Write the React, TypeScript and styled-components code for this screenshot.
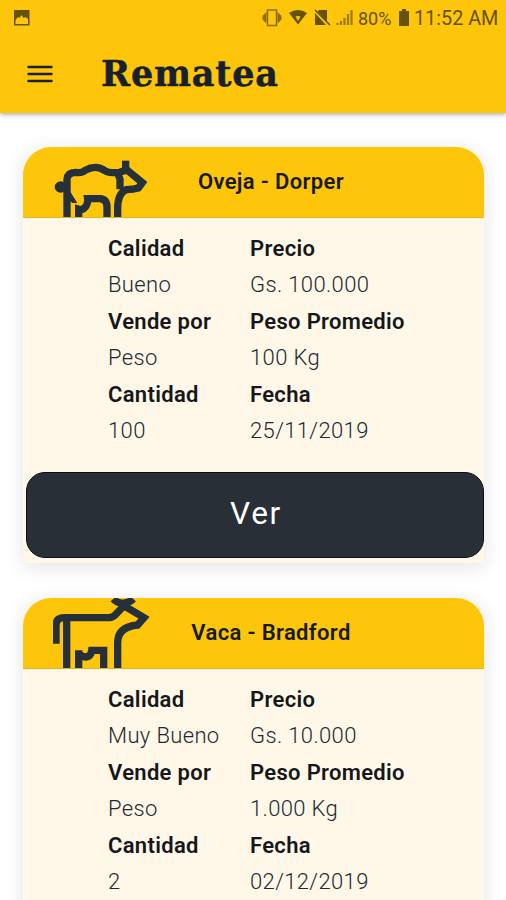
import React from "react";
import styled, { createGlobalStyle } from "styled-components";

const Global = createGlobalStyle`
  * { box-sizing: border-box; }
  body { margin: 0; background: #fff; font-family: Roboto, sans-serif; }
`;

const Screen = styled.div`
  width: 506px;
  height: 900px;
  overflow: hidden;
  background: #fff;
`;

const TopBar = styled.header`
  position: relative;
  height: 113px;
  background: #fec60b;
  box-shadow: 0 1px 5px rgba(0, 0, 0, 0.4);
`;

const StatusBar = styled.div`
  display: flex;
  align-items: center;
  height: 36px;
  padding: 0 8px 0 13px;
  color: #66520c;
`;

const StatusIcons = styled.svg<{ $push?: boolean }>`
  display: block;
  flex: none;
  margin-left: ${(p) => (p.$push ? "auto" : "0")};
`;

const StatusText = styled.span<{ $size: number; $width: number; $gap: number }>`
  flex: none;
  font-size: ${(p) => p.$size}px;
  line-height: 36px;
  padding-top: 1px;
  width: ${(p) => p.$width}px;
  margin-left: ${(p) => p.$gap}px;
  white-space: nowrap;
`;

const TitleRow = styled.div`
  display: flex;
  align-items: center;
  height: 75px;
  padding-left: 27px;
`;

const Brand = styled.h1`
  margin: 0 0 0 48px;
  font: bold 35px/73px "DejaVu Serif", serif;
  letter-spacing: 0.8px;
  color: #17212e;
  -webkit-text-stroke: 0.5px #17212e;
`;

const List = styled.main`
  display: flex;
  flex-direction: column;
  gap: 35px;
  padding: 34px 22px 0 23px;
`;

const Card = styled.article`
  height: 416px;
  flex: none;
  border-radius: 22px 22px 2px 2px;
  background: #fff8e9;
  box-shadow: 0 4px 20px rgba(0, 0, 0, 0.11);
`;

const CardHeader = styled.div`
  display: grid;
  grid-template-columns: 30px 100px 236px;
  height: 71px;
  border-bottom: 1px solid #e8b21c;
  border-radius: 28px 28px 0 0;
  background: #fec60b;
`;

const AnimalIcon = styled.svg`
  grid-column: 2;
  display: block;
  fill: none;
  stroke: #263038;
  stroke-width: 22;
`;

const CardTitle = styled.h2`
  margin: 0;
  font-size: 22px;
  line-height: 70px;
  font-weight: 600;
  letter-spacing: 0.36px;
  text-align: center;
  color: #17191b;
`;

const Details = styled.dl`
  display: grid;
  grid-template-columns: 142px 1fr;
  margin: 0;
  padding: 11.6px 0 0 85px;
  height: 254px;
  align-content: start;
`;

const Field = styled.div`
  height: 73px;
`;

const Label = styled.dt`
  font-size: 22px;
  line-height: 37.4px;
  font-weight: 600;
  letter-spacing: 0.32px;
  color: #15171a;
`;

const Value = styled.dd`
  margin: 0;
  font-size: 22px;
  line-height: 35.6px;
  font-weight: 330;
  letter-spacing: 0.36px;
  color: #222831;
`;

const ViewButton = styled.button`
  display: block;
  width: 458px;
  height: 86px;
  margin-left: 3px;
  padding: 0 0 2px 2px;
  border: 1px solid #07101b;
  border-radius: 19px;
  background: #282f37;
  color: #fff;
  font: 400 31.5px/80px Roboto, sans-serif;
  letter-spacing: 1.7px;
`;

const Sheep = () => (
  <AnimalIcon width="100" height="70" viewBox="130 21 300 210">
    <path d="M172 231V118Q174 97 198 97Q218 100 226 91Q242 82 257 82Q272 82 286 92Q294 98 308 98H334" />
    <ellipse cx="153" cy="141" rx="18" ry="17" fill="#263038" stroke="none" />
    <path d="M176 146L186 162L203 189H188L172 174Z" fill="#263038" stroke="none" />
    <path d="M207 231V208Q219 212 228 200Q236 188 234 176H270Q292 177 292 202V231" />
    <path d="M348 62V92" />
    <path d="M324 98L331 118V148M331 96L352 90L398 128L386 144Q372 148 350 149Q324 160 324 205V231" />
  </AnimalIcon>
);

const Cow = () => (
  <AnimalIcon width="100" height="70" viewBox="130 24 300 210">
    <path d="M139 161V107Q139 83 163 83H300Q312 81 320 71L340 50M171 85V234" />
    <path d="M311 27Q320 38 338 40Q360 38 371 27M332 41L403 83L384 105Q324 111 324 158V234" />
    <path d="M332 30H350V50H332Z" fill="#263038" stroke="none" />
    <path d="M207 234V181M207 188Q214 201 229 201Q244 199 246 181H282V234" />
  </AnimalIcon>
);

type Listing = {
  title: string;
  icon: React.ReactNode;
  fields: [string, string][];
};

const listings: Listing[] = [
  {
    title: "Oveja - Dorper",
    icon: <Sheep />,
    fields: [
      ["Calidad", "Bueno"],
      ["Precio", "Gs. 100.000"],
      ["Vende por", "Peso"],
      ["Peso Promedio", "100 Kg"],
      ["Cantidad", "100"],
      ["Fecha", "25/11/2019"],
    ],
  },
  {
    title: "Vaca - Bradford",
    icon: <Cow />,
    fields: [
      ["Calidad", "Muy Bueno"],
      ["Precio", "Gs. 10.000"],
      ["Vende por", "Peso"],
      ["Peso Promedio", "1.000 Kg"],
      ["Cantidad", "2"],
      ["Fecha", "02/12/2019"],
    ],
  },
];

export default function App() {
  return (
    <Screen>
      <Global />
      <TopBar>
        <StatusBar>
          <StatusIcons width="17" height="17" viewBox="0 0 17 17">
            <path fill="currentColor" fillRule="evenodd" d="M1 0h15.500v15.500h-15.500zM2.500 14h12.500v-5l-2.500-2-2 1-2-3-2 3-1.500-1-2.500 3z" />
          </StatusIcons>
          <StatusIcons $push width="94" height="20" viewBox="0 0 94 20">
            <path fill="none" stroke="currentColor" strokeWidth="1.500" d="M5.500 2h9v15.500h-9z" opacity=".75" />
            <path fill="currentColor" opacity=".75" d="M4.500 4v11.500L0.500 11.500V8zM15.500 4v11.500L19.500 11.500V8z" />
            <path fill="currentColor" fillRule="evenodd" d="M27 5q9-6 18 0l-9 11.500zM33.500 8.500l2.500 4.500 2.500-4.500q-2.500-1-5 0z" />
            <path fill="currentColor" d="M57 2h8v12L55.500 3.500zM53 5l11 12H53z" />
            <path stroke="currentColor" strokeWidth="1.500" d="M53 2l15 15" />
            <path stroke="currentColor" strokeWidth="2.200" opacity=".65" d="M75.500 17v-2M79 17v-4M82.500 17v-7M86 17V6M89.500 17V2" />
          </StatusIcons>
          <StatusText $size={18} $width={40} $gap={2}>80%</StatusText>
          <StatusIcons width="12" height="20" viewBox="0 0 12 20">
            <path fill="currentColor" d="M1 3h3V1h4v2h3v15H1z" />
          </StatusIcons>
          <StatusText $size={19.8} $width={84} $gap={4}>11:52 AM</StatusText>
        </StatusBar>
        <TitleRow>
          <svg width="26" height="18" viewBox="0 0 26 18">
            <path stroke="#1b1f22" strokeWidth="2.400" strokeLinecap="round" d="M1.500 2h23M1.500 9h23M1.500 16h23" />
          </svg>
          <Brand>Rematea</Brand>
        </TitleRow>
      </TopBar>
      <List>
        {listings.map((item) => (
          <Card key={item.title}>
            <CardHeader>
              {item.icon}
              <CardTitle>{item.title}</CardTitle>
            </CardHeader>
            <Details>
              {item.fields.map(([label, value]) => (
                <Field key={label}>
                  <Label>{label}</Label>
                  <Value>{value}</Value>
                </Field>
              ))}
            </Details>
            <ViewButton>Ver</ViewButton>
          </Card>
        ))}
      </List>
    </Screen>
  );
}
